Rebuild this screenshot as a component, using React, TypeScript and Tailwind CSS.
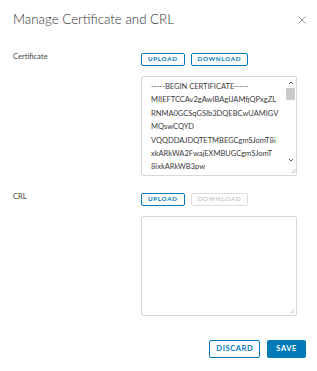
import React from "react";

const certLines = [
  "-----BEGIN CERTIFICATE-----",
  "MIIEFTCCAv2gAwIBAgIJAMfjQPxgZL",
  "RNMA0GCSqGSIb3DQEBCwUAMIGV",
  "MQswCQYD",
  "VQQDDAJDQTETMBEGCgmSJomT8i",
  "xkARkWA2FwajEXMBUGCgmSJomT",
  "8ixkARkWB3pw",
];

function ResizeGrip() {
  return (
    <svg width="6" height="6" viewBox="0 0 6 6" className="text-gray-400">
      <path d="M5.5 1 L1 5.5 M5.5 3.5 L3.5 5.5" stroke="currentColor" strokeWidth="0.7" fill="none" />
    </svg>
  );
}

function Chevron({ down }: { down?: boolean }) {
  return (
    <svg width="6" height="4" viewBox="0 0 6 4" className="text-[#555]">
      <path
        d={down ? "M1 1 L3 3 L5 1" : "M1 3 L3 1 L5 3"}
        stroke="currentColor"
        strokeWidth="1"
        fill="none"
      />
    </svg>
  );
}

function SmallButton({ label, disabled }: { label: string; disabled?: boolean }) {
  return (
    <button
      className={
        disabled
          ? "h-[13px] rounded-[2px] border border-[#dddddd] px-[6px] text-[6.3px] font-bold leading-none tracking-[0.1em] text-[#c8c8c8]"
          : "h-[13px] rounded-[2px] border border-[#0079b8] px-[6px] text-[6.3px] font-bold leading-none tracking-[0.1em] text-[#0079b8]"
      }
    >
      {label}
    </button>
  );
}

function CertBox() {
  return (
    <div className="flex h-[100px] w-[156px] rounded-[2px] border border-[#d7d7d7] bg-white">
      <div className="flex-1 overflow-hidden pl-[9px] pt-[3px] text-[7.5px] leading-[13.4px] text-[#3a3a3a]">
        {certLines.map((l) => (
          <div key={l} className="whitespace-nowrap">
            {l}
          </div>
        ))}
      </div>
      <div className="flex w-[11px] flex-col items-center">
        <div className="mt-[4px]">
          <Chevron />
        </div>
        <div className="mt-[3px] h-[12px] w-[9px] bg-[#c9c9c9]" />
        <div className="flex-1" />
        <Chevron down />
        <div className="mb-[1px] mt-[6px] self-end">
          <ResizeGrip />
        </div>
      </div>
    </div>
  );
}

export default function App() {
  return (
    <div
      className="h-[371px] w-[317px] bg-white text-[#333]"
      style={{ fontFamily: "Lato, 'Open Sans', sans-serif" }}
    >
      <div className="flex items-start justify-between pl-[13px] pr-[11px] pt-[10px]">
        <h1 className="text-[13.3px] font-light leading-[18px] text-[#313131]">
          Manage Certificate and CRL
        </h1>
        <svg width="8" height="8" viewBox="0 0 8 8" className="mt-[6px] text-[#8a8a8a]">
          <path d="M0.5 0.5 L7.5 7.5 M7.5 0.5 L0.5 7.5" stroke="currentColor" strokeWidth="0.9" />
        </svg>
      </div>

      <div className="mt-[25px] grid grid-cols-[128px_156px] pl-[13px]">
        <div className="text-[7.5px] leading-none text-[#444]">Certificate</div>
        <div className="flex flex-col">
          <div className="flex gap-[6px]">
            <SmallButton label="UPLOAD" />
            <SmallButton label="DOWNLOAD" />
          </div>
          <div className="mt-[10px]">
            <CertBox />
          </div>
        </div>
      </div>

      <div className="mt-[17px] grid grid-cols-[128px_156px] pl-[13px]">
        <div className="text-[7.5px] leading-none text-[#444]">CRL</div>
        <div className="flex flex-col">
          <div className="flex gap-[6px]">
            <SmallButton label="UPLOAD" />
            <SmallButton label="DOWNLOAD" disabled />
          </div>
          <div className="mt-[10px] flex h-[100px] w-[156px] items-end justify-end rounded-[2px] border border-[#d7d7d7] p-[1px]">
            <ResizeGrip />
          </div>
        </div>
      </div>

      <div className="mt-[24px] flex justify-end gap-[7px] pr-[11px]">
        <button className="h-[18px] rounded-[2px] border border-[#0079b8] px-[6px] text-[7.5px] font-bold tracking-[0.08em] text-[#0079b8]">
          DISCARD
        </button>
        <button className="h-[18px] rounded-[2px] bg-[#0079b8] px-[9px] text-[7.5px] font-bold tracking-[0.08em] text-white">
          SAVE
        </button>
      </div>
    </div>
  );
}
